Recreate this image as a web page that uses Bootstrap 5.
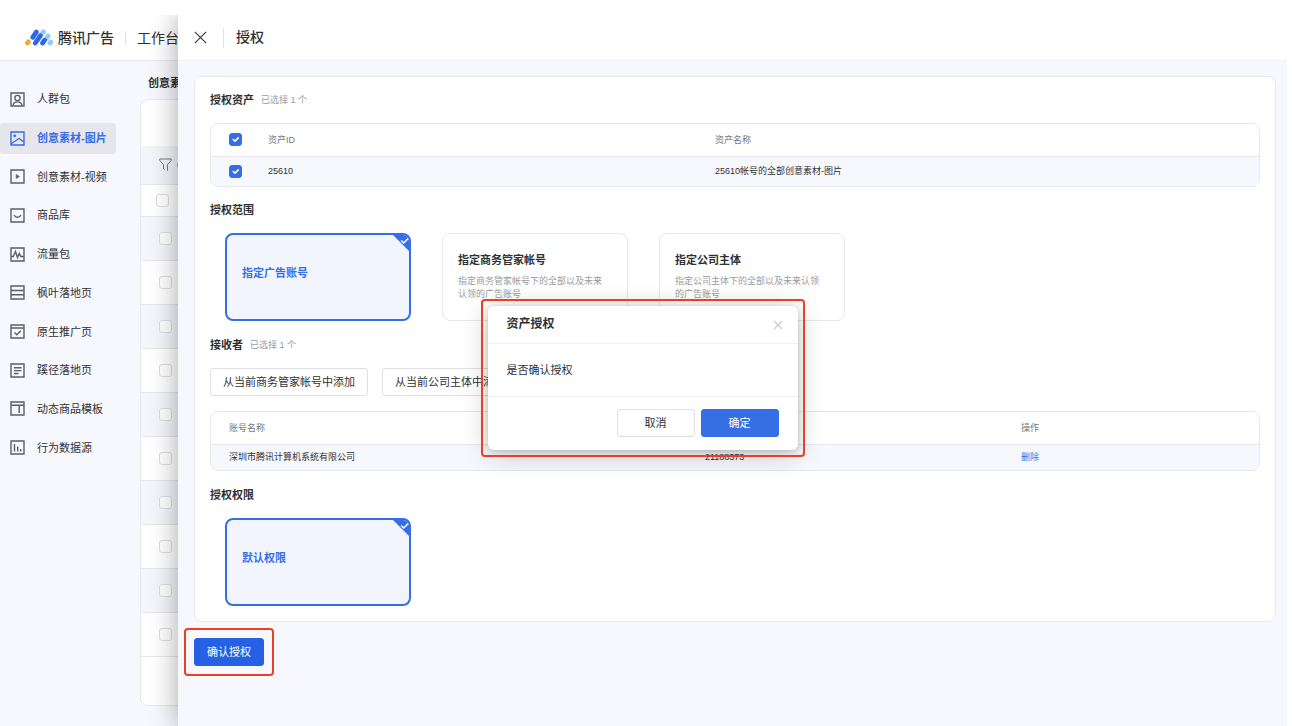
<!DOCTYPE html>
<html lang="zh-CN">
<head>
<meta charset="utf-8">
<meta name="viewport" content="width=device-width, initial-scale=1">
<title>腾讯广告 - 授权</title>
<link href="https://cdn.jsdelivr.net/npm/bootstrap@5.3.0/dist/css/bootstrap.min.css" rel="stylesheet">
<style>
  :root { --brand: #366ee6; --line: #e7e8eb; --page: #f7f8fd; --ink: #303133; --soft: #9a9b9e; --note: #ea4025; }
  body { font-family: "Liberation Sans", "Noto Sans CJK SC", sans-serif; font-size: 11px; line-height: 16px; color: var(--ink); background: #fff; padding: 15px 5px 0 0; min-height: 100vh; display: flex; }
  svg { display: block; flex: none; }
  .app { position: relative; overflow: hidden; background: var(--page); }
  .topbar { height: 46px; background: #fff; border-bottom: 1px solid var(--line); padding-left: 25px; gap: 11px; font-size: 14px; line-height: 14px; }
  .topbar .brand-name { font-size: 14px; font-weight: 500; color: var(--ink); }
  .topbar .v-line { height: 14px; }
  .v-line { width: 1px; background: #e2e3e6; }

  .side { width: 140px; padding-top: 19px; }
  .side ul { height: 387px; }
  .side a { width: 116px; height: 31px; padding-left: 10px; gap: 12px; border-radius: 3px; color: var(--ink); text-decoration: none; white-space: nowrap; }
  .side a svg { color: #5c5e63; }
  .side a.active { background: #e6e6eb; color: var(--brand); font-weight: 700; }
  .side a.active svg { color: var(--brand); }

  .assets h1 { font-size: 11px; line-height: 16px; font-weight: 700; margin: 14px 0 8px 8px; }
  .list-box { background: #fff; border: 1px solid var(--line); border-radius: 8px; margin-bottom: 20px; }
  .list-box .tools { height: 46px; }
  .list-box .filters { height: 39px; background: #f4f5fa; border-bottom: 1px solid var(--line); padding-left: 18px; gap: 5px; }
  .list-box .pill { width: 60px; height: 12px; border: 1px solid #b9bbc0; border-radius: 6px; }
  .list-row { height: 44px; border-bottom: 1px solid var(--line); padding-left: 18px; }
  .list-row.head-row { height: 32px; padding-left: 15px; }
  .list-row:nth-child(even) { background: #f5f6fb; }
  .form-check-input.tick { width: 13px; height: 13px; margin: 0; border-radius: 3px; border: 1px solid #dcdde0; float: none; display: block; }
  .form-check-input.tick:checked { background-color: var(--brand); border-color: var(--brand); }

  .drawer { position: absolute; top: 0; right: 0; bottom: 0; left: 178px; background: var(--page); box-shadow: 0 0 26px rgba(0,0,0,.36); }
  .drawer-head { height: 46px; background: #fff; border-bottom: 1px solid #f0f1f4; padding-left: 16px; gap: 16px; }
  .drawer-head .v-line { height: 20px; }
  .drawer-head h2 { font-size: 14px; font-weight: 500; margin: 0 0 0 -4px; }
  .bare { border: 0; background: none; padding: 0; }
  .drawer-body { padding: 15px 11px 15px 16px; }
  .sheet { background: #fff; border: 1px solid var(--line); border-radius: 8px; padding: 15px; }
  .sheet section + section { margin-top: 15px; }
  .sheet section.after-options { margin-top: 16px; }
  .sheet h3 { font-size: 11px; line-height: 16px; font-weight: 700; margin: 0; }
  .sect-title { gap: 7px; margin-bottom: 15px; }
  .hint { font-size: 9px; color: var(--soft); }
  .grid-box { border: 1px solid var(--line); border-radius: 8px; overflow: hidden; }
  .grid-box table { table-layout: fixed; font-size: 9px; margin: 0; color: var(--ink); border-color: var(--line); }
  .grid-box th, .grid-box td { padding: 0 0 0 18px; font-weight: 400; box-shadow: none; vertical-align: middle; }
  .grid-box th { height: 32px; color: #77797d; border-bottom: 1px solid var(--line); }
  .grid-box td { height: 30px; background: var(--page); border-bottom: 0; }
  .grid-box.compact td { height: 26px; }
  .grid-box .c-check { width: 39px; }
  .grid-box .c-id { width: 447px; }
  .grid-box .c-name { width: 476px; }
  .grid-box .c-account { width: 316px; }
  .grid-box a { color: var(--brand); text-decoration: none; }

  .options { gap: 31px; padding-left: 15px; }
  .option { position: relative; width: 186px; height: 88px; border: 1px solid var(--line); border-radius: 8px; padding: 18px 15px; overflow: hidden; cursor: pointer; }
  .option b { display: block; font-weight: 700; margin-bottom: 7px; }
  .option small { display: block; width: 150px; font-size: 9px; line-height: 13px; color: var(--soft); }
  .option svg { display: none; position: absolute; top: -2px; right: -2px; }
  .btn-check:checked + .option { border: 2px solid var(--brand); background: #f2f5fe; color: var(--brand); padding-top: 30px; }
  .btn-check:checked + .option svg { display: block; }

  .act { height: 28px; padding: 0 12px; font-size: 11px; line-height: 16px; border-radius: 3px; --bs-btn-color: #303133; --bs-btn-bg: #fff; --bs-btn-border-color: #dfe0e3; }
  .act.solid { --bs-btn-color: #fff; --bs-btn-bg: var(--brand); --bs-btn-border-color: var(--brand); }
  .act.deep { --bs-btn-bg: #2660e4; --bs-btn-border-color: #2660e4; }
  .receivers { gap: 14px; margin-bottom: 15px; }
  .submit { margin-top: 16px; }

  .noted::after { content: ""; position: absolute; inset: -7px; border: 2px solid var(--note); border-radius: 4px; pointer-events: none; }
  .submit.noted::after { inset: -11px; }

  .confirm { position: absolute; top: 291px; left: calc(50% - 156px); width: 310px; background: #fff; border-radius: 6px; box-shadow: 0 4px 28px rgba(0,0,0,.22), 0 1px 5px rgba(0,0,0,.16); }
  .confirm header { height: 38px; padding: 0 15px 0 19px; border-bottom: 1px solid #eeeff1; }
  .confirm h2 { font-size: 12px; font-weight: 700; margin: 0; }
  .confirm p { margin: 0; padding: 18px 19px; border-bottom: 1px solid #eeeff1; }
  .confirm footer { padding: 12px 19px 13px; gap: 6px; }
  .confirm .act { width: 78px; }
</style>
</head>
<body>
<div class="app flex-fill d-flex flex-column">
  <header class="topbar d-flex align-items-center">
    <a class="brand-name d-flex align-items-center text-decoration-none" href="#">
      <svg class="me-1" width="29" height="18" viewBox="0 0 29 18" fill="none" stroke-width="4.800" stroke-linecap="round" aria-hidden="true">
        <path d="M2.500 14l.9-1.200" stroke="#f3a93b"/>
        <path d="M17.300 4.300l1-1.400M21.500 9.300l1.600-2.300M25 14l.7-1" stroke="#93cbf7"/>
        <path d="M7.800 8.300l3.500-5.200M10.300 14l5-7.200M17.600 14l2-2.800" stroke="#2f66e6"/>
      </svg>腾讯广告</a>
    <span class="v-line"></span>
    <a class="text-reset text-decoration-none text-nowrap" href="#">工作台</a>
  </header>

  <div class="d-flex flex-fill">
    <nav class="side flex-shrink-0" aria-label="资产">
      <ul class="list-unstyled d-flex flex-column m-0">
        <li class="flex-fill d-flex align-items-center"><a class="d-flex align-items-center" href="#"><svg width="15" height="15" viewBox="0 0 15 15" fill="none" stroke="currentColor" stroke-width="1.400"><path d="M1 1h13v13H1z"/><circle cx="7.500" cy="6" r="2.600"/><path d="M3 13.500c.5-3 2.500-3.600 4.500-3.600s4 .6 4.500 3.600"/></svg>人群包</a></li>
        <li class="flex-fill d-flex align-items-center"><a class="active d-flex align-items-center" aria-current="page" href="#"><svg width="15" height="15" viewBox="0 0 15 15" fill="none" stroke="currentColor" stroke-width="1.400"><path d="M1 1h13v13H1zM1.500 12.500L9 7.500l5 3.500"/><circle cx="4.700" cy="4.800" r=".7" fill="currentColor"/></svg>创意素材-图片</a></li>
        <li class="flex-fill d-flex align-items-center"><a class="d-flex align-items-center" href="#"><svg width="15" height="15" viewBox="0 0 15 15" fill="none" stroke="currentColor" stroke-width="1.400"><path d="M1 1h13v13H1z"/><path d="M6.200 5.400v4.200l3.200-2.100z" fill="currentColor" stroke-width=".6"/></svg>创意素材-视频</a></li>
        <li class="flex-fill d-flex align-items-center"><a class="d-flex align-items-center" href="#"><svg width="15" height="15" viewBox="0 0 15 15" fill="none" stroke="currentColor" stroke-width="1.400"><path d="M1 1h13v13H1zM4 7c1.500 3 5.500 3 7 0"/></svg>商品库</a></li>
        <li class="flex-fill d-flex align-items-center"><a class="d-flex align-items-center" href="#"><svg width="15" height="15" viewBox="0 0 15 15" fill="none" stroke="currentColor" stroke-width="1.400"><path d="M1 1h13v13H1zM1 9.500h2.300L5.500 4.500l2 6 1.800-4 1.500 3H14"/></svg>流量包</a></li>
        <li class="flex-fill d-flex align-items-center"><a class="d-flex align-items-center" href="#"><svg width="15" height="15" viewBox="0 0 15 15" fill="none" stroke="currentColor" stroke-width="1.400"><path d="M1 1h13v13H1zM1 5.500h13M1 9.700h13"/></svg>枫叶落地页</a></li>
        <li class="flex-fill d-flex align-items-center"><a class="d-flex align-items-center" href="#"><svg width="15" height="15" viewBox="0 0 15 15" fill="none" stroke="currentColor" stroke-width="1.400"><path d="M1 1h13v13H1zM1 4h13M4.500 8.500l2.300 2.200 4-3.900"/></svg>原生推广页</a></li>
        <li class="flex-fill d-flex align-items-center"><a class="d-flex align-items-center" href="#"><svg width="15" height="15" viewBox="0 0 15 15" fill="none" stroke="currentColor" stroke-width="1.400"><path d="M1 1h13v13H1zM4 4.700h7.500M4 7.600h7.500M4 10.500h4.500"/></svg>蹊径落地页</a></li>
        <li class="flex-fill d-flex align-items-center"><a class="d-flex align-items-center" href="#"><svg width="15" height="15" viewBox="0 0 15 15" fill="none" stroke="currentColor" stroke-width="1.400"><path d="M1 1h13v13H1zM1 4.200h13M9.200 4.200V12"/></svg>动态商品模板</a></li>
        <li class="flex-fill d-flex align-items-center"><a class="d-flex align-items-center" href="#"><svg width="15" height="15" viewBox="0 0 15 15" fill="none" stroke="currentColor" stroke-width="1.400"><path d="M1 1h13v13H1zM4.500 4v7.500M7.700 6.500v5M10.700 9v2.500"/></svg>行为数据源</a></li>
      </ul>
    </nav>

    <main class="assets flex-fill d-flex flex-column">
      <h1>创意素材-图片</h1>
      <div class="list-box flex-fill">
        <div class="tools"></div>
        <div class="filters d-flex align-items-center">
          <svg width="13" height="14" viewBox="0 0 13 14" fill="none" stroke="#77797d"><path d="M.8 1h11.400v1.500L8.500 6.500v6.300M.8 1v1.500L4.500 6.500v4.300l1.300 1"/></svg>
          <span class="pill"></span>
        </div>
        <div>
          <div class="list-row head-row d-flex align-items-center"><input class="form-check-input tick" type="checkbox" aria-label="全选"></div>
          <div class="list-row d-flex align-items-center"><input class="form-check-input tick" type="checkbox" aria-label="素材 1"></div>
          <div class="list-row d-flex align-items-center"><input class="form-check-input tick" type="checkbox" aria-label="素材 2"></div>
          <div class="list-row d-flex align-items-center"><input class="form-check-input tick" type="checkbox" aria-label="素材 3"></div>
          <div class="list-row d-flex align-items-center"><input class="form-check-input tick" type="checkbox" aria-label="素材 4"></div>
          <div class="list-row d-flex align-items-center"><input class="form-check-input tick" type="checkbox" aria-label="素材 5"></div>
          <div class="list-row d-flex align-items-center"><input class="form-check-input tick" type="checkbox" aria-label="素材 6"></div>
          <div class="list-row d-flex align-items-center"><input class="form-check-input tick" type="checkbox" aria-label="素材 7"></div>
          <div class="list-row d-flex align-items-center"><input class="form-check-input tick" type="checkbox" aria-label="素材 8"></div>
          <div class="list-row d-flex align-items-center"><input class="form-check-input tick" type="checkbox" aria-label="素材 9"></div>
          <div class="list-row d-flex align-items-center"><input class="form-check-input tick" type="checkbox" aria-label="素材 10"></div>
        </div>
      </div>
    </main>
  </div>

  <aside class="drawer" aria-label="授权">
    <div class="drawer-head d-flex align-items-center">
      <button class="bare" type="button" aria-label="关闭"><svg width="13" height="13" viewBox="0 0 13 13" fill="none" stroke="#3a3b3e" stroke-width="1.200"><path d="M.8.8l11.400 11.400M12.200.8L.8 12.200"/></svg></button>
      <span class="v-line"></span>
      <h2>授权</h2>
    </div>
    <div class="drawer-body">
      <div class="sheet">
        <section>
          <div class="sect-title d-flex align-items-center"><h3>授权资产</h3><span class="hint">已选择 1 个</span></div>
          <div class="grid-box">
            <table class="table">
              <colgroup><col class="c-check"><col class="c-id"><col></colgroup>
              <thead><tr><th><input class="form-check-input tick" type="checkbox" checked aria-label="全选资产"></th><th>资产ID</th><th>资产名称</th></tr></thead>
              <tbody><tr><td><input class="form-check-input tick" type="checkbox" checked aria-label="25610"></td><td>25610</td><td>25610帐号的全部创意素材-图片</td></tr></tbody>
            </table>
          </div>
        </section>

        <section>
          <div class="sect-title d-flex align-items-center"><h3>授权范围</h3></div>
          <div class="options d-flex">
            <input class="btn-check" type="radio" name="scope" id="scope-ad" checked>
            <label class="option" for="scope-ad"><b>指定广告账号</b><svg width="20" height="20" viewBox="0 0 20 20"><path d="M0 0h20v20z" fill="#366ee6"/><path d="M10.200 7.500l2.500 2.500 4.800-4.800" fill="none" stroke="#fff" stroke-width="1.500"/></svg></label>
            <input class="btn-check" type="radio" name="scope" id="scope-biz">
            <label class="option" for="scope-biz"><b>指定商务管家帐号</b><small>指定商务管家帐号下的全部以及未来认领的广告账号</small></label>
            <input class="btn-check" type="radio" name="scope" id="scope-corp">
            <label class="option" for="scope-corp"><b>指定公司主体</b><small>指定公司主体下的全部以及未来认领的广告账号</small></label>
          </div>
        </section>

        <section class="after-options">
          <div class="sect-title d-flex align-items-center"><h3>接收者</h3><span class="hint">已选择 1 个</span></div>
          <div class="receivers d-flex">
            <button class="btn act" type="button">从当前商务管家帐号中添加</button>
            <button class="btn act" type="button">从当前公司主体中添加</button>
          </div>
          <div class="grid-box compact">
            <table class="table">
              <colgroup><col class="c-name"><col class="c-account"><col></colgroup>
              <thead><tr><th>账号名称</th><th>账号ID</th><th>操作</th></tr></thead>
              <tbody><tr><td>深圳市腾讯计算机系统有限公司</td><td>21188373</td><td><a href="#">删除</a></td></tr></tbody>
            </table>
          </div>
        </section>

        <section class="after-options">
          <div class="sect-title d-flex align-items-center"><h3>授权权限</h3></div>
          <div class="options d-flex">
            <input class="btn-check" type="radio" name="right" id="right-default" checked>
            <label class="option" for="right-default"><b>默认权限</b><svg width="20" height="20" viewBox="0 0 20 20"><path d="M0 0h20v20z" fill="#366ee6"/><path d="M10.200 7.500l2.500 2.500 4.800-4.800" fill="none" stroke="#fff" stroke-width="1.500"/></svg></label>
          </div>
        </section>
      </div>
      <button class="btn act solid deep submit noted position-relative" type="button">确认授权</button>
    </div>
  </aside>

  <div class="confirm noted" role="dialog" aria-labelledby="confirm-title">
    <header class="d-flex align-items-center justify-content-between">
      <h2 id="confirm-title">资产授权</h2>
      <button class="bare" type="button" aria-label="关闭"><svg width="10" height="10" viewBox="0 0 10 10" fill="none" stroke="#c9cacd" stroke-width="1.200"><path d="M1 1l8 8M9 1L1 9"/></svg></button>
    </header>
    <p>是否确认授权</p>
    <footer class="d-flex justify-content-end">
      <button class="btn act" type="button">取消</button>
      <button class="btn act solid" type="button">确定</button>
    </footer>
  </div>
</div>
<script src="https://cdn.jsdelivr.net/npm/bootstrap@5.3.0/dist/js/bootstrap.bundle.min.js"></script>
</body>
</html>
